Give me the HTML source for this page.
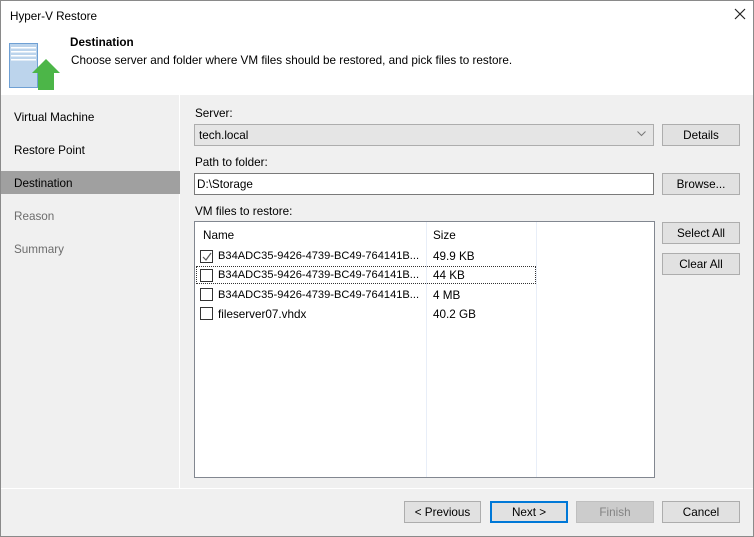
<!DOCTYPE html><html><head><style>
*{margin:0;padding:0;box-sizing:border-box}
body{width:754px;height:537px;position:relative;font-family:"Liberation Sans",sans-serif;font-size:11.7px;color:#000;background:#f0f0f0;overflow:hidden}
.a{position:absolute;white-space:nowrap}
.t{margin-top:1px}
.btn{position:absolute;background:#e1e1e1;border:1px solid #adadad;text-align:center;line-height:21px;font-size:11.7px}
.cb{position:absolute;width:13px;height:13px;border:1px solid #333;background:#fff}
.fn{font-size:11.1px;margin-top:1px}
</style></head><body>
<div class="a" style="left:0;top:0;width:754px;height:537px;border:1px solid #8a8a8a"></div>
<div class="a" style="left:1px;top:1px;width:752px;height:94px;background:#fff"></div>
<div class="a t" style="left:10px;top:9px">Hyper-V Restore</div>
<svg class="a" style="left:734px;top:8px" width="12" height="12"><path d="M1 1L11 11M11 1L1 11" stroke="#222" stroke-width="1.2"/></svg>
<svg class="a" style="left:8px;top:42px" width="54" height="48">
<rect x="1.5" y="1.5" width="28" height="44" fill="#bcd4ec" stroke="#6fa0d4"/>
<rect x="3" y="5" width="25" height="1.5" fill="#fff"/><rect x="3" y="9" width="25" height="1.5" fill="#fff"/><rect x="3" y="13" width="25" height="1.5" fill="#fff"/><rect x="3" y="17" width="25" height="1.5" fill="#fff"/>
<path d="M38 17 L52 31 L46 31 L46 48 L30 48 L30 31 L24 31 Z" fill="#4cb648"/>
</svg>
<div class="a t" style="left:70px;top:35px;font-weight:bold">Destination</div>
<div class="a t" style="left:71px;top:53px">Choose server and folder where VM files should be restored, and pick files to restore.</div>
<div class="a" style="left:1px;top:95px;width:179px;height:393px;background:#f0f0f0;border-right:1px solid #fff"></div>
<div class="a t" style="left:14px;top:110px">Virtual Machine</div>
<div class="a t" style="left:14px;top:143px">Restore Point</div>
<div class="a" style="left:1px;top:171px;width:179px;height:23px;background:#a0a0a0"></div>
<div class="a t" style="left:14px;top:176px">Destination</div>
<div class="a t" style="left:14px;top:209px;color:#6d6d6d">Reason</div>
<div class="a t" style="left:14px;top:242px;color:#6d6d6d">Summary</div>
<div class="a t" style="left:195px;top:106px">Server:</div>
<div class="a" style="left:194px;top:124px;width:460px;height:22px;background:#e5e5e5;border:1px solid #adadad;padding:4px 4px">tech.local</div>
<svg class="a" style="left:637px;top:131px" width="9" height="6"><path d="M0.5 0.5L4.5 4.5L8.5 0.5" fill="none" stroke="#777"/></svg>
<div class="btn" style="left:662px;top:124px;width:78px;height:22px">Details</div>
<div class="a t" style="left:195px;top:155px">Path to folder:</div>
<div class="a" style="left:194px;top:173px;width:460px;height:22px;background:#fff;border:1px solid #7a7a7a;padding:4px 2px">D:\Storage</div>
<div class="btn" style="left:662px;top:173px;width:78px;height:22px">Browse...</div>
<div class="a t" style="left:195px;top:204px">VM files to restore:</div>
<div class="a" style="left:194px;top:221px;width:461px;height:257px;background:#fff;border:1px solid #828790"></div>
<div class="a" style="left:426px;top:222px;width:1px;height:255px;background:#e8eef8"></div>
<div class="a" style="left:536px;top:222px;width:1px;height:255px;background:#e8eef8"></div>
<div class="a t" style="left:203px;top:228px">Name</div>
<div class="a t" style="left:433px;top:228px">Size</div>
<div class="a" style="left:196px;top:266px;width:340px;height:18px;border:1px dotted #333"></div>
<div class="cb" style="left:200px;top:250px"></div>
<svg class="a" style="left:202px;top:252px" width="10" height="10"><path d="M1 5L4 8L9 1" fill="none" stroke="#555" stroke-width="1.2"/></svg>
<div class="a fn" style="left:218px;top:249px">B34ADC35-9426-4739-BC49-764141B...</div><div class="a t" style="left:433px;top:249px">49.9 KB</div>
<div class="cb" style="left:200px;top:269px"></div>
<div class="a fn" style="left:218px;top:268px">B34ADC35-9426-4739-BC49-764141B...</div><div class="a t" style="left:433px;top:268px">44 KB</div>
<div class="cb" style="left:200px;top:288px"></div>
<div class="a fn" style="left:218px;top:288px">B34ADC35-9426-4739-BC49-764141B...</div><div class="a t" style="left:433px;top:288px">4 MB</div>
<div class="cb" style="left:200px;top:307px"></div>
<div class="a t" style="left:218px;top:307px">fileserver07.vhdx</div><div class="a t" style="left:433px;top:307px">40.2 GB</div>
<div class="btn" style="left:662px;top:222px;width:78px;height:22px">Select All</div>
<div class="btn" style="left:662px;top:253px;width:78px;height:22px">Clear All</div>
<div class="a" style="left:1px;top:488px;width:752px;height:1px;background:#fff"></div>
<div class="btn" style="left:404px;top:501px;width:77px;height:22px">&lt; Previous</div>
<div class="btn" style="left:490px;top:501px;width:78px;height:22px;border:2px solid #0078d7;line-height:19px">Next &gt;</div>
<div class="btn" style="left:576px;top:501px;width:78px;height:22px;background:#ccc;border-color:#bfbfbf;color:#838383">Finish</div>
<div class="btn" style="left:662px;top:501px;width:78px;height:22px">Cancel</div>
</body></html>
